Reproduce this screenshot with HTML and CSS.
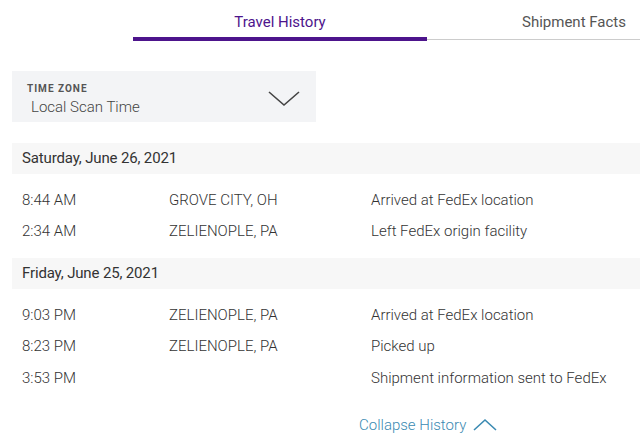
FILE: index.html
```html
<!DOCTYPE html>
<html>
<head>
<meta charset="utf-8">
<link rel="stylesheet" href="styles.css">
</head>
<body>
<div class="page">
  <div class="tabs">
    <div class="tab active">Travel History</div>
    <div class="tab">Shipment Facts</div>
  </div>
  <div class="tz">
    <div class="tz-text">
      <div class="tz-label">TIME ZONE</div>
      <div class="tz-value">Local Scan Time</div>
    </div>
    <svg class="tz-chev" width="32" height="16" viewBox="0 0 32 16"><polyline points="1,1 16,14 31,1" fill="none" stroke="#444" stroke-width="1.6"/></svg>
  </div>
  <div class="day">Saturday, June 26, 2021</div>
  <div class="rows">
    <div class="row"><span class="c1">8:44 AM</span><span class="c2">GROVE CITY, OH</span><span class="c3">Arrived at FedEx location</span></div>
    <div class="row"><span class="c1">2:34 AM</span><span class="c2">ZELIENOPLE, PA</span><span class="c3">Left FedEx origin facility</span></div>
  </div>
  <div class="day">Friday, June 25, 2021</div>
  <div class="rows">
    <div class="row"><span class="c1">9:03 PM</span><span class="c2">ZELIENOPLE, PA</span><span class="c3">Arrived at FedEx location</span></div>
    <div class="row"><span class="c1">8:23 PM</span><span class="c2">ZELIENOPLE, PA</span><span class="c3">Picked up</span></div>
    <div class="row"><span class="c1">3:53 PM</span><span class="c2"></span><span class="c3">Shipment information sent to FedEx</span></div>
  </div>
  <div class="collapse">
    <span>Collapse History</span>
    <svg width="24" height="13" viewBox="0 0 24 13"><polyline points="1,12 12,2 23,12" fill="none" stroke="#3a8ab2" stroke-width="1.6"/></svg>
  </div>
</div>
</body>
</html>
```
FILE: styles.css
```css
html, body { margin: 0; padding: 0; background: #fff; }
body { font-family: Roboto, "Liberation Sans", sans-serif; color: #333; width: 640px; height: 441px; overflow: hidden; }
.page { width: 640px; }
.tabs { display: flex; margin-left: 133px; width: 507px; overflow: hidden; height: 41px; }
.tab { flex: 0 0 294px; text-align: center; font-size: 15px; color: #555; padding-top: 13px; box-sizing: border-box; border-bottom: 1px solid #ccc; height: 40px; }
.tab.active { color: #4d148c; border-bottom: 4px solid #4d148c; height: 41px; }
.tz { margin: 30px 0 0 12px; width: 304px; height: 51px; background: #f3f4f6; display: flex; align-items: center; justify-content: space-between; box-sizing: border-box; padding: 0 16px 0 15px; }
.tz-text { padding-top: 7px; }
.tz-label { font-size: 10px; font-weight: 700; letter-spacing: 1px; color: #555; line-height: 12px; }
.tz-value { font-size: 15px; font-weight: 300; color: #444; margin-left: 4px; margin-top: 2px; line-height: 20px; }
.tz-chev { margin-top: 4px; }
.day { margin: 21px 0 0 12px; height: 31px; background: #f7f7f7; font-size: 15px; color: #333; padding-left: 10px; line-height: 31px; letter-spacing: -0.15px; }
.rows { padding-top: 10px; padding-bottom: 11px; }
.row { display: flex; height: 31.5px; align-items: center; font-size: 15px; font-weight: 300; color: #333; }
.c1 { margin-left: 22px; width: 147px; }
.c2 { width: 202px; }
.rows + .day { margin-top: 0; }
.collapse { display: flex; align-items: center; margin: 11px 0 0 359px; color: #3a8ab2; font-size: 15px; font-weight: 300; gap: 7px; }
```
